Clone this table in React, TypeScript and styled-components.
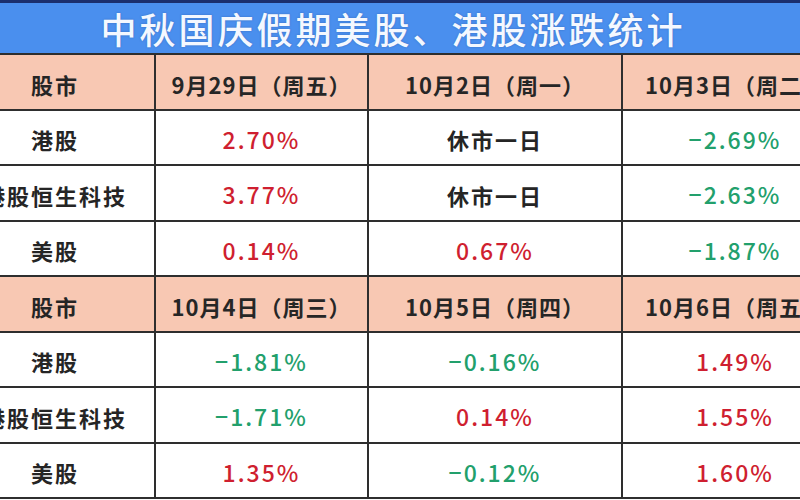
import React from "react";
import styled, { createGlobalStyle } from "styled-components";

const Global = createGlobalStyle`
  html, body { margin: 0; padding: 0; background: #ffffff; }
  body { font-family: "Noto Sans CJK SC", "Noto Sans", sans-serif; }
`;

const Page = styled.div`
  width: 800px;
  height: 500px;
  overflow: hidden;
  background: #fbfbfb;
`;

const TitleBar = styled.div`
  height: 50px;
  border-top: 3px solid #1b2f6e;
  background: #4a8fee;
  display: flex;
  align-items: center;
  justify-content: center;
  padding-right: 14px;
  color: #f4f8ff;
  font-family: "Noto Sans CJK SC", sans-serif;
  font-size: 36px;
  font-weight: 500;
  letter-spacing: 3px;
  line-height: 1;
  text-shadow: 0 0 2px rgba(20, 40, 100, 0.35);
`;

const Grid = styled.div`
  margin-left: -44px;
  width: 891px;
  display: grid;
  grid-template-columns: 198px 211px 252px 224px;
  grid-auto-rows: 53.5px;
  gap: 2px;
  padding: 2px 0;
  background: #2e2e2e;
`;

const Cell = styled.div<{ $head?: boolean }>`
  display: flex;
  align-items: center;
  justify-content: center;
  padding-top: 4px;
  box-sizing: border-box;
  background: ${(p) => (p.$head ? "#f8c8b3" : "#ffffff")};
`;

const Label = styled.span`
  font-family: "Noto Sans CJK SC", sans-serif;
  font-size: 22px;
  font-weight: 700;
  letter-spacing: 2px;
  color: #252525;
  line-height: 1;
`;

const DateLabel = styled.span`
  font-family: "Noto Sans CJK SC", sans-serif;
  font-size: 22px;
  font-weight: 700;
  letter-spacing: 1px;
  color: #262626;
  line-height: 1;
`;

const Value = styled.span<{ $up: boolean }>`
  font-family: "Noto Sans CJK SC", "Noto Sans", sans-serif;
  font-size: 23px;
  font-weight: 500;
  letter-spacing: 2px;
  line-height: 1;
  color: ${(p) => (p.$up ? "#cf1f30" : "#22a06c")};
`;

type Block = {
  dates: string[];
  rows: { name: string; values: string[] }[];
};

const blocks: Block[] = [
  {
    dates: ["9月29日（周五）", "10月2日（周一）", "10月3日（周二）"],
    rows: [
      { name: "港股", values: ["2.70%", "休市一日", "−2.69%"] },
      { name: "港股恒生科技", values: ["3.77%", "休市一日", "−2.63%"] },
      { name: "美股", values: ["0.14%", "0.67%", "−1.87%"] },
    ],
  },
  {
    dates: ["10月4日（周三）", "10月5日（周四）", "10月6日（周五）"],
    rows: [
      { name: "港股", values: ["−1.81%", "−0.16%", "1.49%"] },
      { name: "港股恒生科技", values: ["−1.71%", "0.14%", "1.55%"] },
      { name: "美股", values: ["1.35%", "−0.12%", "1.60%"] },
    ],
  },
];

const renderValue = (v: string) => {
  if (!/%$/.test(v)) return <Label>{v}</Label>;
  return <Value $up={!v.startsWith("−")}>{v}</Value>;
};

export default function App() {
  return (
    <>
      <Global />
      <Page>
        <TitleBar>中秋国庆假期美股、港股涨跌统计</TitleBar>
        <Grid>
          {blocks.map((b, bi) => (
            <React.Fragment key={bi}>
              <Cell $head>
                <Label>股市</Label>
              </Cell>
              {b.dates.map((d) => (
                <Cell $head key={d}>
                  <DateLabel>{d}</DateLabel>
                </Cell>
              ))}
              {b.rows.map((r) => (
                <React.Fragment key={r.name}>
                  <Cell>
                    <Label>{r.name}</Label>
                  </Cell>
                  {r.values.map((v, vi) => (
                    <Cell key={vi}>{renderValue(v)}</Cell>
                  ))}
                </React.Fragment>
              ))}
            </React.Fragment>
          ))}
        </Grid>
      </Page>
    </>
  );
}
